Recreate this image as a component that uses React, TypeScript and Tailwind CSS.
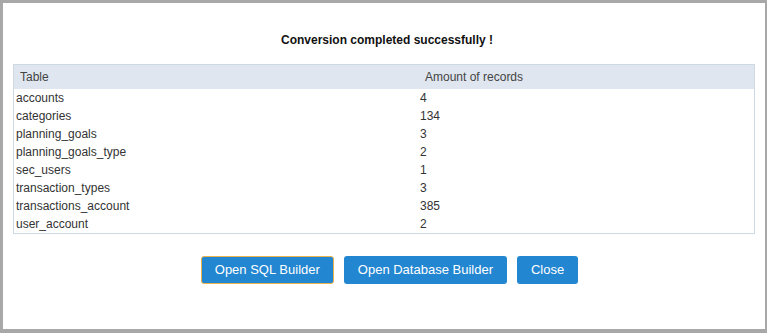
const rows: [string, number][] = [
  ['accounts', 4],
  ['categories', 134],
  ['planning_goals', 3],
  ['planning_goals_type', 2],
  ['sec_users', 1],
  ['transaction_types', 3],
  ['transactions_account', 385],
  ['user_account', 2],
]

export default function App() {
  return (
    <div className="w-[767px] h-[333px] bg-white border-[#a8a8a8] border-t-[3px] border-l-[3px] border-r-[2px] border-b-[4px] font-['Liberation_Sans',Arial,sans-serif] overflow-hidden">
      <h1 className="pt-[30px] pl-[6px] text-center text-[12px] leading-[15px] font-bold text-[#111]">
        Conversion completed successfully !
      </h1>

      <div className="mx-[10px] mt-[16px] border border-[#cdd9e3]">
        <div className="flex h-[24px] items-center bg-[#dfe6ef] text-[12px] text-[#444]">
          <div className="w-[403px] pl-[6px]">Table</div>
          <div className="pl-[8px]">Amount of records</div>
        </div>
        {rows.map(([name, count]) => (
          <div key={name} className="flex h-[18px] items-center text-[12px] text-[#333]">
            <div className="w-[403px] pl-[2px]">{name}</div>
            <div className="pl-[3px]">{count}</div>
          </div>
        ))}
      </div>

      <div className="mt-[22px] flex justify-center gap-[10px] pl-[11px]">
        <button className="h-[28px] px-[13px] rounded-[3px] bg-[#2386d1] border border-[#e8b24d] text-white text-[13px]">
          Open SQL Builder
        </button>
        <button className="h-[28px] px-[14px] rounded-[3px] bg-[#2386d1] text-white text-[13px]">
          Open Database Builder
        </button>
        <button className="h-[28px] px-[14px] rounded-[3px] bg-[#2386d1] text-white text-[13px]">
          Close
        </button>
      </div>
    </div>
  )
}
